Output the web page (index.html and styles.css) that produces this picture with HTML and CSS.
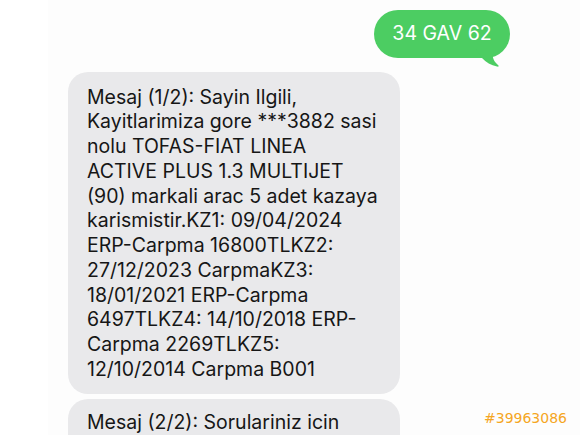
FILE: index.html
```html
<!DOCTYPE html>
<html lang="en">
<head>
  <meta charset="UTF-8">
  <meta name="viewport" content="width=device-width, initial-scale=1.0">
  <title>Mesajlar</title>
  <link rel="stylesheet" href="styles.css">
</head>
<body>
  <main class="thread">

    <div class="bubble sent">
      34 GAV 62
      <svg class="tail" width="24" height="20" viewBox="0 0 24 20">
        <path d="M0 0 H18 C16 6 16 11 22 16 C23 17 23 18 21 17.6 C15 16.5 10 13 6 9 Z" fill="#4ccd62"/>
      </svg>
    </div>

    <div class="bubble received">
      Mesaj (1/2): Sayin Ilgili,<br>
      Kayitlarimiza gore ***3882 sasi<br>
      nolu TOFAS-FIAT LINEA<br>
      ACTIVE PLUS 1.3 MULTIJET<br>
      (90) markali arac 5 adet kazaya<br>
      karismistir.KZ1: 09/04/2024<br>
      ERP-Carpma 16800TLKZ2:<br>
      27/12/2023 CarpmaKZ3:<br>
      18/01/2021 ERP-Carpma<br>
      6497TLKZ4: 14/10/2018 ERP-<br>
      Carpma 2269TLKZ5:<br>
      12/10/2014 Carpma B001
    </div>

    <div class="bubble received second">
      Mesaj (2/2): Sorulariniz icin
    </div>

  </main>

  <span class="listing-id">#39963086</span>
</body>
</html>
```

FILE: styles.css
```css
body {
  margin: 0;
  background-color: #fff;
  font-family: Inter, 'Liberation Sans', Arial, sans-serif;
  height: 435px;
  overflow: hidden;
  position: relative;
}

.thread {
  display: flex;
  flex-direction: column;
  padding-top: 10px;
  background: linear-gradient(to right, #fff 48px, #fdfdfd 48px);
  min-height: 425px;
}

.bubble {
  font-size: 19.5px;
  line-height: 24.75px;
  border-radius: 20px;
  position: relative;
}

.sent {
  align-self: flex-end;
  margin-right: 70px;
  width: 136px;
  height: 48px;
  box-sizing: border-box;
  border-radius: 24px;
  background-color: #4ccd62;
  color: #fff;
  display: flex;
  align-items: center;
  justify-content: center;
  padding-bottom: 1px;
}

.tail {
  position: absolute;
  right: 10px;
  bottom: -11px;
}

.received {
  align-self: flex-start;
  margin-left: 68px;
  margin-top: 14px;
  width: 332px;
  box-sizing: border-box;
  padding: 12.5px 8px 12px 19px;
  background-color: #e9e9eb;
  color: #161616;
  white-space: nowrap;
  overflow: hidden;
}

.received.second {
  margin-top: 5px;
  padding-top: 11.5px;
  padding-bottom: 20px;
}

.listing-id {
  position: absolute;
  left: 484px;
  top: 410px;
  font-family: 'DejaVu Sans', sans-serif;
  font-size: 14px;
  color: #f5a623;
}
```
